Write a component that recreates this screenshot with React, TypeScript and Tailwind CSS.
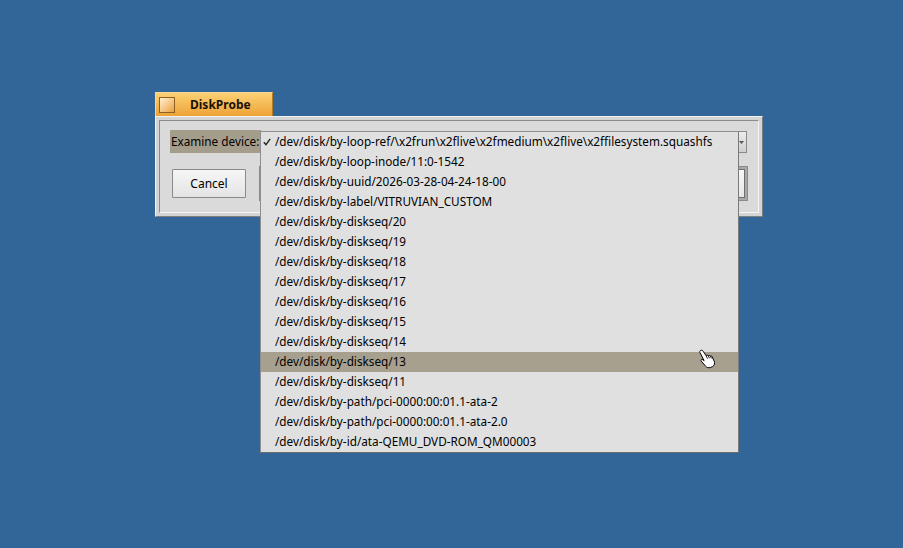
import React from "react";

const items = [
  "/dev/disk/by-loop-ref/\\x2frun\\x2flive\\x2fmedium\\x2flive\\x2ffilesystem.squashfs",
  "/dev/disk/by-loop-inode/11:0-1542",
  "/dev/disk/by-uuid/2026-03-28-04-24-18-00",
  "/dev/disk/by-label/VITRUVIAN_CUSTOM",
  "/dev/disk/by-diskseq/20",
  "/dev/disk/by-diskseq/19",
  "/dev/disk/by-diskseq/18",
  "/dev/disk/by-diskseq/17",
  "/dev/disk/by-diskseq/16",
  "/dev/disk/by-diskseq/15",
  "/dev/disk/by-diskseq/14",
  "/dev/disk/by-diskseq/13",
  "/dev/disk/by-diskseq/11",
  "/dev/disk/by-path/pci-0000:00:01.1-ata-2",
  "/dev/disk/by-path/pci-0000:00:01.1-ata-2.0",
  "/dev/disk/by-id/ata-QEMU_DVD-ROM_QM00003",
];

export default function App() {
  return (
    <div
      className="relative w-[903px] h-[548px] overflow-hidden bg-[#336698] pt-[92px] pl-[155px] text-[11.75px] text-black"
      style={{ fontFamily: '"Noto Sans", "DejaVu Sans", sans-serif' }}
    >
      {/* Window */}
      <div className="flex flex-col w-[608px]">
        {/* Tab */}
        <div className="flex items-center w-[118px] h-[24px] bg-gradient-to-b from-[#fcd173] to-[#eda235] border border-[#f7d795] border-r-[#b97a24] border-b-0 pl-[3px] relative z-10">
          <div className="w-[16px] h-[16px] border border-[#8e6222] bg-gradient-to-br from-[#fff1cf] to-[#eba035]" />
          <span className="ml-[15px] font-bold text-[12px] text-[#1a1208]">DiskProbe</span>
        </div>
        {/* Frame */}
        <div className="bg-[#d4d4d4] border border-[#f2f2f2] border-r-[#7e7e7e] border-b-[#7e7e7e] p-[3px]">
          <div className="bg-[#dadada] border border-[#8c8c8c] border-r-[#f4f4f4] border-b-[#f4f4f4] pt-[9px] pl-[10px] pr-[11px] pb-[11px] flex flex-col">
            {/* Row 1 */}
            <div className="flex h-[23px] items-stretch">
              <div className="w-[91px] bg-[#a59d8b] flex items-center pl-[1px] whitespace-nowrap">
                Examine device:
              </div>
              <div className="flex-1 mt-[1px] border border-[#8a8a8a] bg-gradient-to-b from-[#ececec] to-[#cfcfcf] flex items-center justify-end pr-[2px]">
                <svg width="5" height="3" viewBox="0 0 5 3">
                  <path d="M0 0 H5 L2.5 3 Z" fill="#555" />
                </svg>
              </div>
            </div>
            {/* Row 2 */}
            <div className="flex h-[35px] mt-[13px] items-center">
              <button className="ml-[2px] w-[74px] h-[29px] border border-[#8a8a8a] bg-gradient-to-b from-[#f6f6f6] to-[#e4e4e4] rounded-[1px] flex items-center justify-center text-[12px]">
                Cancel
              </button>
              <div className="ml-[13px] flex-1 -mr-[1px] h-[35px] bg-[#a8a8a8] border border-[#8a8a8a] p-[2px]">
                <div className="w-full h-full border border-[#6e6e6e] bg-gradient-to-b from-[#f8f8f8] to-[#e6e6e6]" />
              </div>
            </div>
          </div>
        </div>
      </div>

      {/* Popup menu */}
      <div className="absolute left-[260px] top-[131px] w-[479px] bg-[#e0e0e0] border border-[#8e8e8e] border-b-[#6a6a6a] border-r-[#7a7a7a] flex flex-col">
        {items.map((t, i) => (
          <div
            key={i}
            className={
              "relative h-[20px] flex items-center pl-[14px] whitespace-nowrap " +
              (i === 11 ? "bg-[#a8a08f]" : "")
            }
          >
            {i === 0 && (
              <svg className="absolute left-[2px] top-[6px]" width="8" height="8" viewBox="0 0 8 8">
                <path d="M0.8 4.2 L3 6.6 L7.2 0.8" fill="none" stroke="#222" strokeWidth="1.4" />
              </svg>
            )}
            {t}
          </div>
        ))}
      </div>

      {/* Hand cursor */}
      <svg className="absolute left-[697px] top-[349px]" width="20" height="20" viewBox="0 0 20 20">
        <path
          d="M3.5 1.5 C4.5 0.8 5.6 1.3 6.2 2.3 L9 6.6 C9.5 6 10.6 6 11.1 6.7 C11.7 6.2 12.8 6.3 13.2 7.1 C13.8 6.7 14.9 7 15.2 7.9 L17.2 12.2 C18 14.2 17.6 16.4 15.6 17.6 L13.4 18.5 C11.6 19.1 9.8 18.6 8.6 17.2 L4.2 12 C3.6 11.2 4.2 10.1 5.2 10.4 L7.1 11.6 L2.9 3.5 C2.6 2.7 2.8 2 3.5 1.5 Z"
          fill="#fff"
          stroke="#000"
          strokeWidth="1"
          strokeLinejoin="round"
        />
        <path d="M9 6.6 L10.6 9.6 M11.1 6.7 L12.6 9.3 M13.2 7.1 L14.5 9.4" fill="none" stroke="#000" strokeWidth="0.9" />
      </svg>
    </div>
  );
}
